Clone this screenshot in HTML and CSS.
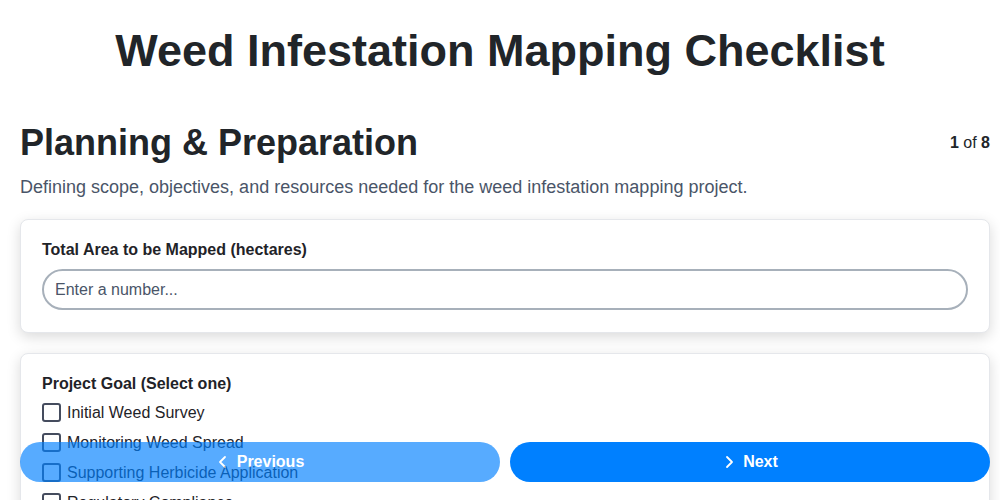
FILE: index.html
```html
<!DOCTYPE html>
<html>
<head>
<meta charset="utf-8">
<link rel="stylesheet" href="styles.css">
</head>
<body>
<h1 class="title">Weed Infestation Mapping Checklist</h1>
<main class="page">
  <div class="section-head">
    <h2 class="section-title">Planning &amp; Preparation</h2>
    <div class="progress"><b>1</b> of <b>8</b></div>
  </div>
  <p class="section-desc">Defining scope, objectives, and resources needed for the weed infestation mapping project.</p>
  <div class="card">
    <label class="field-label">Total Area to be Mapped (hectares)</label>
    <input class="field-input" type="text" placeholder="Enter a number...">
  </div>
  <div class="card">
    <div class="field-label">Project Goal (Select one)</div>
    <div class="options">
      <label class="option"><span class="box"></span>Initial Weed Survey</label>
      <label class="option"><span class="box"></span>Monitoring Weed Spread</label>
      <label class="option"><span class="box"></span>Supporting Herbicide Application</label>
      <label class="option"><span class="box"></span>Regulatory Compliance</label>
      <label class="option"><span class="box"></span>Research Purposes</label>
    </div>
  </div>
</main>
<nav class="nav">
  <button class="btn btn-prev"><svg width="14" height="14" viewBox="0 0 14 14"><path d="M9 2 L4 7 L9 12" fill="none" stroke="#fff" stroke-width="1.8" stroke-linecap="round" stroke-linejoin="round"/></svg>Previous</button>
  <button class="btn btn-next"><svg width="14" height="14" viewBox="0 0 14 14"><path d="M5 2 L10 7 L5 12" fill="none" stroke="#fff" stroke-width="1.8" stroke-linecap="round" stroke-linejoin="round"/></svg>Next</button>
</nav>
</body>
</html>
```
FILE: styles.css
```css
* { box-sizing: border-box; }
html, body { margin: 0; padding: 0; background: #fff; }
body { font-family: "Liberation Sans", Arial, sans-serif; color: #1f2328; }
.title {
  margin: 0;
  padding-top: 27px;
  text-align: center;
  font-size: 45px;
  line-height: 48px;
  font-weight: bold;
  color: #212529;
}
.page { padding: 0 10px 100px 20px; }
.section-head {
  display: flex;
  justify-content: space-between;
  align-items: center;
  margin-top: 47px;
}
.section-title {
  margin: 0;
  font-size: 36px;
  line-height: 42px;
  font-weight: bold;
  color: #212529;
}
.progress { font-size: 16px; color: #212529; }
.progress b { font-weight: bold; }
.section-desc {
  margin: 13px 0 21px;
  font-size: 18px;
  line-height: 21px;
  color: #4a5568;
}
.card {
  background: #fff;
  border: 1px solid #e5e7eb;
  border-radius: 8px;
  padding: 20px 21px 22px;
  box-shadow: 0 4px 14px rgba(0,0,0,0.15);
  margin-bottom: 20px;
}
.field-label {
  display: block;
  font-size: 16px;
  line-height: 19px;
  font-weight: bold;
  color: #1f2328;
  margin-bottom: 10px;
}
.field-input {
  display: block;
  width: 100%;
  height: 41px;
  border: 2px solid #a7b0ba;
  border-radius: 21px;
  padding: 0 11px;
  font-family: "Liberation Sans", Arial, sans-serif;
  font-size: 16px;
  color: #1f2328;
  background: #fff;
  outline: none;
}
.field-input::placeholder { color: #4a5568; }
.options { display: flex; flex-direction: column; gap: 11px; }
.option {
  display: flex;
  align-items: center;
  gap: 6px;
  font-size: 16px;
  line-height: 19px;
  color: #1f2328;
}
.box {
  width: 19px;
  height: 19px;
  border: 2px solid #454c5e;
  border-radius: 3px;
  flex: none;
}
.nav {
  position: fixed;
  left: 20px;
  right: 10px;
  bottom: 18px;
  display: flex;
  gap: 10px;
}
.btn {
  flex: 1;
  height: 40px;
  border: none;
  border-radius: 20px;
  background: #0080ff;
  color: #fff;
  font-family: "Liberation Sans", Arial, sans-serif;
  font-size: 16px;
  font-weight: bold;
  display: flex;
  align-items: center;
  justify-content: center;
  gap: 7px;
}
.btn-prev { opacity: 0.66; }
```
